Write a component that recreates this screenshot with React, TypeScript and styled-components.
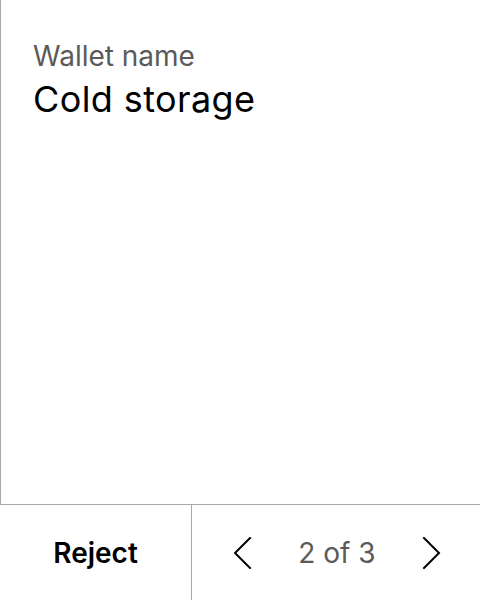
import * as React from 'react';
import styled, { createGlobalStyle } from 'styled-components';

const GlobalStyle = createGlobalStyle`
	html, body {
		margin: 0;
		padding: 0;
		background: #ffffff;
		font-family: Inter, 'Noto Sans', sans-serif;
	}
`;

const Chevron = ({ dir }: { dir: 'left' | 'right' }) => (
	<svg width="24" height="32" viewBox="0 0 24 32" fill="none">
		<path
			d={dir === 'left' ? 'M20 1 L5 16 L20 31' : 'M4 1 L19 16 L4 31'}
			stroke="#000"
			strokeWidth="2"
			strokeLinecap="square"
		/>
	</svg>
);

const App = () => {
	return (
		<Screen>
			<GlobalStyle />
			<Content>
				<Label>Wallet name</Label>
				<Value>Cold storage</Value>
			</Content>
			<Footer>
				<RejectButton>Reject</RejectButton>
				<Pager>
					<NavButton aria-label="Previous">
						<Chevron dir="left" />
					</NavButton>
					<PageText>2 of 3</PageText>
					<NavButton aria-label="Next">
						<Chevron dir="right" />
					</NavButton>
				</Pager>
			</Footer>
		</Screen>
	);
};

export default App;

const Screen = styled.div`
	width: 480px;
	height: 600px;
	display: flex;
	flex-direction: column;
	overflow: hidden;
`;

const Content = styled.div`
	flex: 1;
	border-left: 1px solid #a8a8a8;
	border-bottom: 1px solid #a8a8a8;
	padding: 38px 0 0 32px;
`;

const Label = styled.div`
	font-size: 28px;
	line-height: 36px;
	color: #5a5a5a;
`;

const Value = styled.div`
	font-size: 36px;
	line-height: 44px;
	letter-spacing: 0.4px;
	color: #000;
	margin-top: 3px;
`;

const Footer = styled.div`
	height: 95px;
	display: grid;
	grid-template-columns: 192px 1fr;
`;

const RejectButton = styled.div`
	display: flex;
	align-items: center;
	justify-content: center;
	font-size: 28px;
	font-weight: 600;
	color: #000;
	border-right: 1px solid #a8a8a8;
`;

const Pager = styled.div`
	display: flex;
	align-items: center;
	justify-content: center;
	gap: 44px;
	padding-left: 2px;
`;

const NavButton = styled.div`
	display: flex;
	align-items: center;
	justify-content: center;
	width: 24px;
	height: 32px;
`;

const PageText = styled.div`
	font-size: 28px;
	color: #5a5a5a;
`;
